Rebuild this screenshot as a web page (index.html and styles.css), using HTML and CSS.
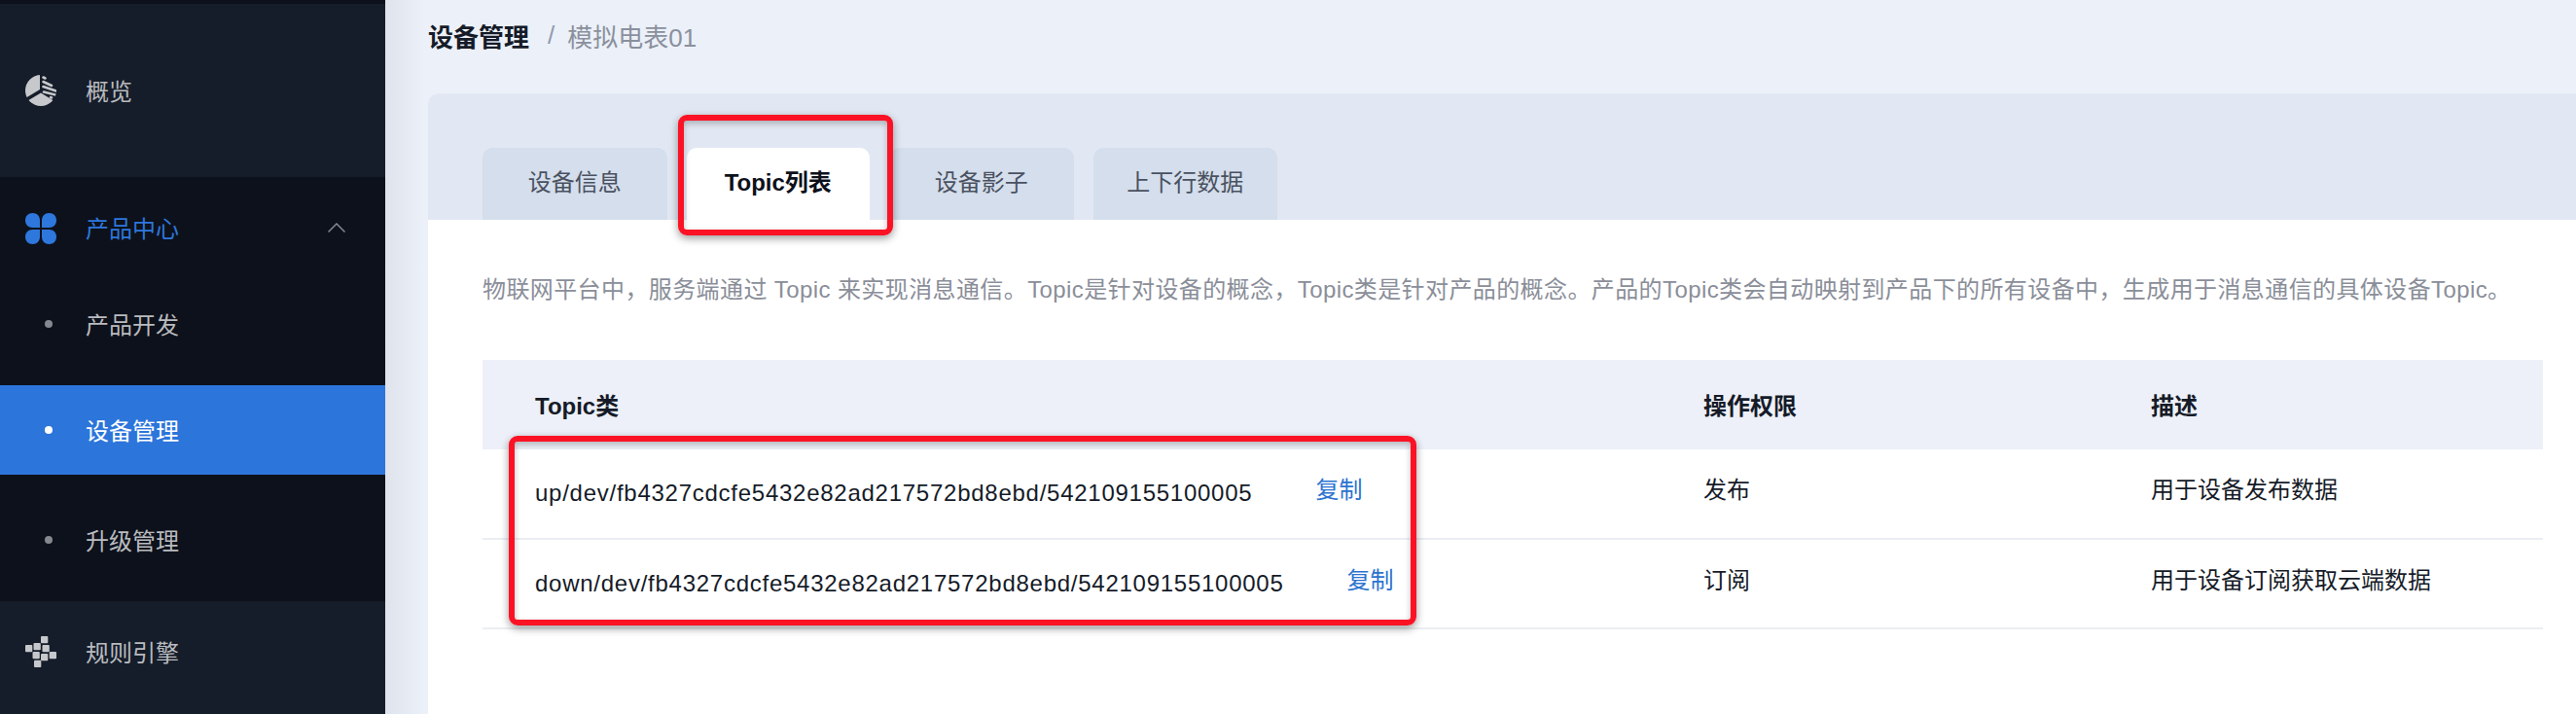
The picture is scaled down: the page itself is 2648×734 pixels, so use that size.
FILE: index.html
```html
<!DOCTYPE html>
<html lang="zh-CN">
<head>
    <meta charset="UTF-8">
    <title>设备管理</title>
    <link rel="stylesheet" href="styles.css">
</head>
<body>
    <div class="app">
        <aside class="sidebar">
            <div class="menu-item">
                <svg class="menu-icon" viewBox="0 0 32 32">
                    <clipPath id="pie-clip"><circle cx="16" cy="16" r="16"/></clipPath>
                    <g clip-path="url(#pie-clip)" fill="#c6c8cb" stroke="#c6c8cb">
                        <path d="M15 0 L15 15 L0 24 L-2 0 Z" stroke="none"/>
                        <path d="M0 28 L16 18.500 L30 27 L30 34 L0 34 Z" stroke="none"/>
                        <g stroke-width="2.600" stroke-linecap="round" fill="none">
                            <path d="M18.500 2.500 L20.500 3.500"/>
                            <path d="M18.500 7 L27 11"/>
                            <path d="M18.500 12 L33 17"/>
                            <path d="M19 17.500 L33 21"/>
                            <path d="M26 23 L27 23.500"/>
                        </g>
                    </g>
                </svg>
                <span>概览</span>
            </div>
            <div class="menu-group">
                <div class="group-title">
                    <svg class="menu-icon" viewBox="0 0 32 32">
                        <path d="M7.500 0 C12 0 15 3 15 7.500 L15 15 L7.500 15 C3 15 0 12 0 7.500 C0 3 3 0 7.500 0 Z" fill="#2e77dc"/>
                        <path d="M24.500 0 C29 0 32 3 32 7.500 C32 12 29 15 24.500 15 L17 15 L17 7.500 C17 3 20 0 24.500 0 Z" fill="#2e77dc"/>
                        <path d="M7.500 32 C3 32 0 29 0 24.500 C0 20 3 17 7.500 17 L15 17 L15 24.500 C15 29 12 32 7.500 32 Z" fill="#2e77dc"/>
                        <path d="M24.500 32 C20 32 17 29 17 24.500 L17 17 L24.500 17 C29 17 32 20 32 24.500 C32 29 29 32 24.500 32 Z" fill="#2e77dc"/>
                    </svg>
                    <span>产品中心</span>
                    <svg class="chevron" viewBox="0 0 18 10">
                        <path d="M.5 9.500 L9 1 L17.500 9.500" fill="none" stroke="#85888f" stroke-width="1.500"/>
                    </svg>
                </div>
                <div class="sub-item"><i class="dot"></i><span>产品开发</span></div>
                <div class="sub-item active"><i class="dot"></i><span>设备管理</span></div>
                <div class="sub-item last"><i class="dot"></i><span>升级管理</span></div>
            </div>
            <div class="menu-item rules">
                <svg class="menu-icon" viewBox="0 0 32 32">
                    <g fill="#c6c8cb">
                        <rect x="16" y="0" width="7.300" height="7.300" rx="1"/>
                        <rect x="0" y="9" width="7.300" height="7.300" rx="1"/>
                        <rect x="8.500" y="7" width="7.300" height="7.300" rx="1"/>
                        <rect x="17.500" y="9" width="7.300" height="7.300" rx="1"/>
                        <rect x="7.500" y="16" width="7.300" height="7.300" rx="1"/>
                        <rect x="16" y="18" width="7.300" height="7.300" rx="1"/>
                        <rect x="24.700" y="16" width="7.300" height="7.300" rx="1"/>
                        <rect x="9" y="24.700" width="7.300" height="7.300" rx="1"/>
                    </g>
                </svg>
                <span>规则引擎</span>
            </div>
        </aside>

        <main class="main">
            <div class="breadcrumb">
                <b>设备管理</b>
                <span class="sep">/</span>
                <span class="crumb">模拟电表01</span>
            </div>

            <section class="panel">
                <div class="tabs">
                    <div class="tab">设备信息</div>
                    <div class="tab current">Topic列表</div>
                    <div class="tab">设备影子</div>
                    <div class="tab">上下行数据</div>
                </div>
                <div class="panel-body">
                    <p class="intro">物联网平台中&#xFF0C;服务端通过 Topic 来实现消息通信。Topic是针对设备的概念&#xFF0C;Topic类是针对产品的概念。产品的Topic类会自动映射到产品下的所有设备中&#xFF0C;生成用于消息通信的具体设备Topic。</p>
                    <table class="topic-table">
                        <thead>
                            <tr>
                                <th class="col-topic">Topic类</th>
                                <th class="col-perm">操作权限</th>
                                <th>描述</th>
                            </tr>
                        </thead>
                        <tbody>
                            <tr>
                                <td><span class="path">up/dev/fb4327cdcfe5432e82ad217572bd8ebd/542109155100005</span><a class="copy">复制</a></td>
                                <td>发布</td>
                                <td>用于设备发布数据</td>
                            </tr>
                            <tr>
                                <td><span class="path">down/dev/fb4327cdcfe5432e82ad217572bd8ebd/542109155100005</span><a class="copy">复制</a></td>
                                <td>订阅</td>
                                <td>用于设备订阅获取云端数据</td>
                            </tr>
                        </tbody>
                    </table>
                </div>
            </section>

            <!-- 截图上的红框标注 -->
            <div class="mark mark-tab"></div>
            <div class="mark mark-rows"></div>
        </main>
    </div>
</body>
</html>
```

FILE: styles.css
```css
* {
    box-sizing: border-box;
}

body {
    margin: 0;
    font-family: "Liberation Sans", "Noto Sans CJK SC", sans-serif;
    font-size: 24px;
    color: #151b28;
    background-color: #ecf0f8;
    overflow: hidden;
}

.app {
    display: flex;
    height: 734px;
}

/* 左侧菜单 */
.sidebar {
    width: 396px;
    flex-shrink: 0;
    padding-top: 4px;
    background-color: #0d111b;
    color: #b9bbbf;
}

.menu-item {
    display: flex;
    align-items: center;
    gap: 30px;
    height: 178px;
    padding-left: 26px;
    background-color: #151d2a;
}

.menu-item.rules {
    height: 116px;
    padding-bottom: 12px;
}

.menu-icon {
    width: 32px;
    height: 32px;
    flex-shrink: 0;
}

.menu-item span,
.group-title span,
.sub-item span {
    margin-top: -2px;
}

.menu-group {
    height: 436px;
}

.group-title {
    display: flex;
    align-items: center;
    gap: 30px;
    height: 105px;
    padding-left: 26px;
    color: #2e77dc;
}

.chevron {
    width: 18px;
    height: 10px;
    margin-left: 123px;
    margin-top: -2px;
}

.sub-item {
    display: flex;
    align-items: center;
    height: 92px;
    margin-bottom: 17px;
    padding-left: 46px;
}

.sub-item.last {
    margin-top: 21px;
}

.sub-item.active {
    margin-bottom: 0;
    background-color: #2c75da;
    color: #fff;
}

.dot {
    width: 8px;
    height: 8px;
    margin-right: 34px;
    border-radius: 50%;
    background-color: #85888f;
}

.active .dot {
    background-color: #fff;
}

/* 内容区 */
.main {
    position: relative;
    flex: 1;
    min-width: 0;
    padding-left: 44px;
    background: linear-gradient(to right, #dfe3ec, #ecf0f8 40px);
}

.breadcrumb {
    display: flex;
    align-items: center;
    height: 96px;
    padding-bottom: 24px;
    font-size: 26px;
}

.breadcrumb b {
    margin-right: 19px;
}

.sep {
    margin-right: 13px;
    color: #8f9bb0;
}

.crumb {
    color: #8a909d;
}

.panel {
    height: 638px;
    border-top-left-radius: 10px;
    background-color: #fff;
}

.tabs {
    display: flex;
    align-items: flex-end;
    gap: 20px;
    height: 130px;
    padding-left: 56px;
    border-top-left-radius: 10px;
    background-color: #e2e8f3;
}

.tab {
    width: 189.5px;
    height: 74px;
    line-height: 72px;
    text-align: center;
    border-radius: 10px 10px 0 0;
    background-color: #d4deec;
    color: #4a5160;
}

.tab.current {
    width: 188.5px;
    background-color: #fff;
    color: #0d111b;
    font-weight: bold;
}

.panel-body {
    padding: 0 34px 0 56px;
}

.intro {
    margin: 55px 0 55px;
    line-height: 34px;
    letter-spacing: 0.4px;
    white-space: nowrap;
    color: #8a8e99;
}

.topic-table {
    width: 100%;
    border-collapse: collapse;
    table-layout: fixed;
}

.topic-table th {
    height: 92px;
    padding: 0 0 2px 54px;
    text-align: left;
    background-color: #edf0f8;
}

.topic-table th + th,
.topic-table td + td {
    padding-left: 0;
}

.col-topic {
    width: 1255px;
}

.col-perm {
    width: 460px;
}

.topic-table td {
    height: 92px;
    padding: 25px 0 0 54px;
    line-height: 34px;
    vertical-align: top;
    border-bottom: 2px solid #ebeef2;
}

.path {
    letter-spacing: 0.74px;
}

.copy {
    margin-left: 65px;
    color: #2c73cf;
    vertical-align: 3px;
}

/* 红框标注 */
.mark {
    position: absolute;
    border: 6px solid #fb1225;
    border-radius: 9px;
    box-shadow: 0 3px 8px rgba(0, 0, 0, 0.4), inset 0 3px 6px rgba(0, 0, 0, 0.25);
}

.mark-tab {
    left: 301px;
    top: 118px;
    width: 221px;
    height: 124px;
}

.mark-rows {
    left: 127px;
    top: 448px;
    width: 933px;
    height: 195px;
}
```
